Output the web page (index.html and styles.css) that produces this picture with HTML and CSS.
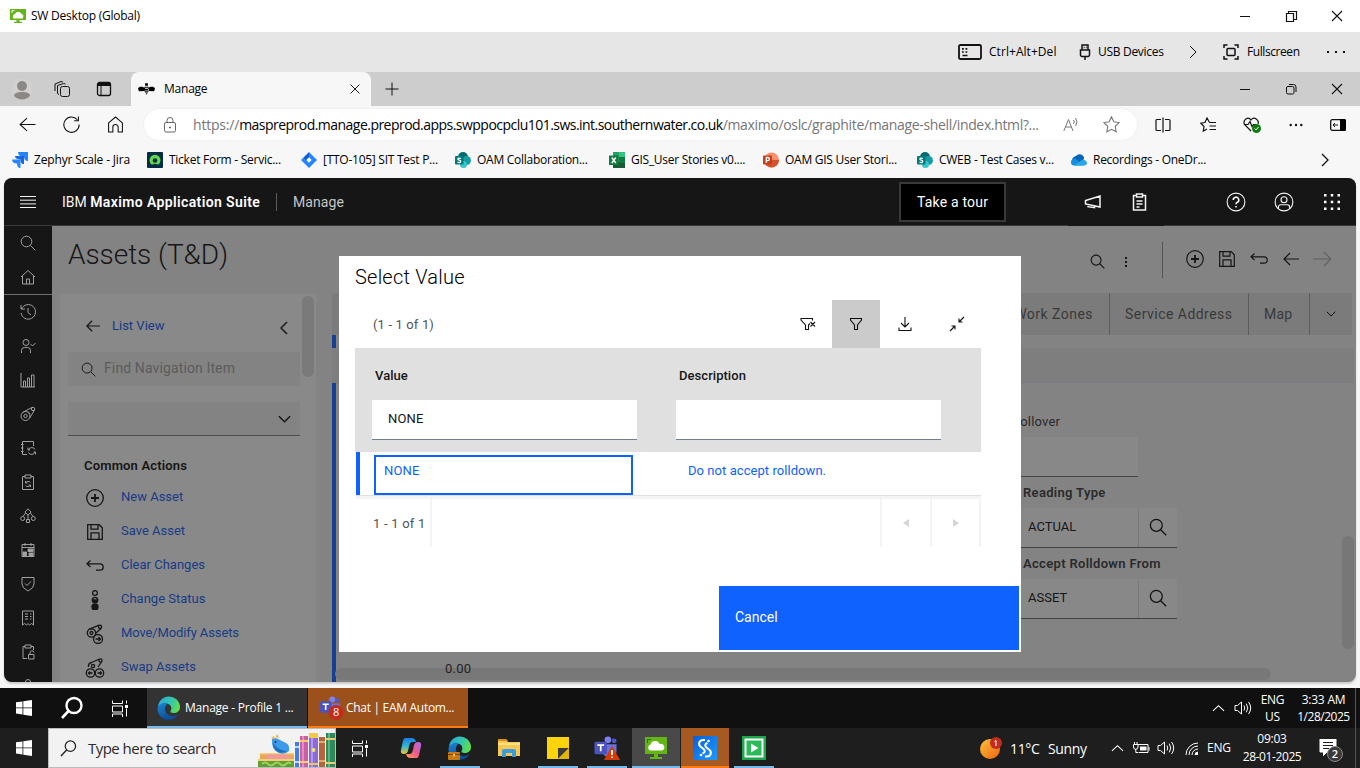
FILE: index.html
```html
<!DOCTYPE html>
<html lang="en">
<head>
<meta charset="utf-8">
<title>SW Desktop (Global)</title>
<link rel="stylesheet" href="styles.css">
</head>
<body>
<svg class="defs" aria-hidden="true">
  <defs>
    <linearGradient id="edgeA" x1="0" y1="0.2" x2="1" y2="0.5"><stop offset="0" stop-color="#2aa5dc"/><stop offset=".6" stop-color="#35c9a8"/><stop offset="1" stop-color="#62dd4c"/></linearGradient>
    <linearGradient id="edgeB" x1="0" y1="0" x2="0.5" y2="1"><stop offset="0" stop-color="#1b86d6"/><stop offset="1" stop-color="#0c4a94"/></linearGradient>
    <linearGradient id="copA" x1="0" y1="0" x2="0" y2="1"><stop offset="0" stop-color="#1c7be6"/><stop offset=".5" stop-color="#2fb5d8"/><stop offset="1" stop-color="#f0c62d"/></linearGradient>
    <linearGradient id="copB" x1="1" y1="0" x2="0" y2="1"><stop offset="0" stop-color="#a66bf0"/><stop offset=".5" stop-color="#ee5a8c"/><stop offset="1" stop-color="#ff9d4f"/></linearGradient>
    <linearGradient id="sun" x1="0" y1="0" x2="1" y2="1"><stop offset="0" stop-color="#f9c23c"/><stop offset="1" stop-color="#f2620f"/></linearGradient>
    <linearGradient id="blue" x1="0" y1="0" x2="1" y2="1"><stop offset="0" stop-color="#0b5ed7"/><stop offset="1" stop-color="#1c9bff"/></linearGradient>
  </defs>
  <symbol id="min" viewBox="0 0 16 16"><path d="M3 8.5h10"/></symbol>
  <symbol id="restore" viewBox="0 0 16 16"><path d="M3.500 5.500h7v8h-7zM5.500 5.500v-2h8v8h-3" stroke-width="1.200"/></symbol>
  <symbol id="restore-r" viewBox="0 0 16 16"><rect x="3.5" y="5.5" width="7.5" height="7.5" rx="1.5"/><path d="M6 3.500h4.500a2.500 2.500 0 0 1 2.500 2.500V11"/></symbol>
  <symbol id="x" viewBox="0 0 16 16"><path d="M3 3l10 10M13 3L3 13" stroke-width="1.100"/></symbol>
  <symbol id="search" viewBox="0 0 16 16"><circle cx="6.500" cy="6.500" r="5.300"/><path d="M10.400 10.400l4.900 4.900"/></symbol>
  <symbol id="plusc" viewBox="0 0 20 20"><circle cx="10" cy="10" r="8.300"/><path d="M10 6v8M6 10h8" stroke-width="1.800"/></symbol>
  <symbol id="save" viewBox="0 0 18 18"><path d="M1.700 1.700h11.500l3.100 3.100v11.500H1.700zM5 1.700v4.500h7V1.700M5 16.300v-6.500h8v6.500"/></symbol>
  <symbol id="undo" viewBox="0 0 18 18"><path d="M4.500 3.500L1 6.800l3.500 3.300M1 6.800h13a3.200 3.200 0 0 1 0 6.400H10"/></symbol>
  <symbol id="left" viewBox="0 0 16 16"><path d="M7 2L1 8l6 6M1 8h15"/></symbol>
  <symbol id="right" viewBox="0 0 18 16"><path d="M11 1l7 7-7 7M0 8h17"/></symbol>
  <symbol id="engine" viewBox="0 0 16 16"><circle cx="5.500" cy="10" r="4.500"/><circle cx="5.500" cy="10" r="1.700"/><circle cx="13" cy="3" r="1.700"/><path d="M2.500 6.500l9.300-5M9.700 12l4.800-8M8 5.500l2 2.500"/></symbol>
  <symbol id="win" viewBox="0 0 16 16"><path d="M0 2.300l6.500-.9v6.100H0zM7.300 1.300L16 0v7.500H7.300zM0 8.300h6.500v6.200L0 13.600zM7.300 8.300H16V16l-8.700-1.300z"/></symbol>
  <symbol id="taskview" viewBox="0 0 17 16"><path d="M.5 0v3h10V0M.5 5.500h10v6H.5zM.5 16.500v-3h10v3M14.500 0v3M14.500 8v8"/><path d="M13 4.500h3v3h-3z" fill="#fff" stroke="none"/></symbol>
  <symbol id="caret" viewBox="0 0 14 8"><path d="M1 7l6-5.500L13 7" stroke-width="1.200"/></symbol>
  <symbol id="speaker" viewBox="0 0 18 16"><path d="M1 5.500h2.500L7.500 2v12l-4-3.500H1zM10 5.500q1.500 2.500 0 5M12.300 3.700q3 4.300 0 8.600M14.600 2q4.200 6 0 12"/></symbol>
  <symbol id="edge" viewBox="0 0 24 24"><path d="M1 12A11 11 0 0 1 23 11c0 4-3 6-6.500 6-2.500 0-3.500-1-3-2 1.500-2 1.300-6-2.500-7C7 7 2 9 1 12z" fill="url(#edgeA)"/><path d="M.500 13C1 8 7 5.500 11 7.500c-3.500 2-4 7-1.500 10 2.500 3 7.500 3.500 12 .5C18 24 12 25 7 23 3 21 .500 17 .500 13z" fill="url(#edgeB)"/></symbol>
  <symbol id="sharepoint" viewBox="0 0 16 16"><circle cx="8" cy="5" r="5" fill="#036c70"/><circle cx="11.500" cy="8.500" r="4.500" fill="#1a9ba1"/><circle cx="8.500" cy="12.500" r="3.500" fill="#37c6d0"/><rect y="4" width="8.500" height="8.500" rx="1" fill="#03787c"/><path d="M6 6.500Q3 5.500 2.800 7c0 1.300 3 1 3 2.500 0 1.400-2.300 1.200-3.300.5" fill="none" stroke="#fff" stroke-width="1.200"/></symbol>
  <symbol id="citrix" viewBox="0 0 24 24"><path d="M1 1h22v17H1zM10 18h4v3h4v2H6v-2h4z" fill="#62b515"/><path d="M3.500 7V3.500H7" fill="none" stroke="#2f6b05"/><path d="M6 14.500a3.200 3.200 0 0 1 .6-6 4.700 4.700 0 0 1 9-.5 3.300 3.300 0 0 1 2.400 6.500z" fill="#fff"/></symbol>
  <symbol id="teams" viewBox="0 0 24 24"><circle cx="14" cy="4" r="3.500" fill="#7b83eb"/><circle cx="20.500" cy="5" r="2.500" fill="#5059c9"/><path d="M9 8.500h14v7a5 5 0 0 1-4.500 5A7 7 0 0 1 9 19z" fill="#6a72dc"/><rect y="6" width="13" height="13" rx="1.500" fill="#4b53bc"/><path d="M3 9.500h7M6.500 9.500v6.500" stroke="#fff" stroke-width="1.800" fill="none"/></symbol>
</svg>

<header class="titlebar">
  <svg class="logo16" viewBox="0 0 16 16"><path d="M0 1h16v11H0zM6.500 12h3v1.700H12V15H4v-1.300h2.500z" fill="#62b515"/><path d="M2 10.500V2.500h12v8z" fill="#62b515" stroke="#fff" stroke-width=".01"/><path d="M3 10.500V9.500a2.500 2.500 0 0 1 2-3.500 3.500 3.500 0 0 1 6.500 0 2.500 2.500 0 0 1 1.500 3.500v1z" fill="#fff"/><path d="M2 5V2.500h2.500" fill="none" stroke="#fff"/></svg>
  <span class="ui">SW Desktop (Global)</span>
  <div class="winctl"><span><svg><use href="#min"/></svg></span><span><svg><use href="#restore"/></svg></span><span><svg><use href="#x"/></svg></span></div>
</header>

<div class="viewerbar">
  <svg class="kbd" viewBox="0 0 24 16"><rect x="1" y="1" width="22" height="14" rx="1.500" stroke-width="1.800"/><path d="M4 4.800h1.800M7.500 4.800h1.800M4 8h1.800M7.500 8h1.800M4.500 11.500h5" stroke-width="1.700"/></svg>
  <span class="ui cad">Ctrl+Alt+Del</span>
  <svg class="usb" viewBox="0 0 12 16"><path d="M3 6V1h6v5M1.500 6h9v5a1.500 1.500 0 0 1-1.500 1.500H3A1.500 1.500 0 0 1 1.500 11zM6 12.500V16M4.700 3.500h.8M6.800 3.500h.8" stroke-width="1.500"/></svg>
  <span class="ui usbt">USB Devices</span>
  <svg class="chev" viewBox="0 0 8 14"><path d="M1 1l6 6-6 6"/></svg>
  <svg class="full" viewBox="0 0 16 16"><path d="M1 4V1h3.500M11.500 1H15v3M15 12v3h-3.500M4.500 15H1v-3" stroke-width="1.500"/><rect x="4" y="4.500" width="8" height="7" rx="1" stroke-width="1.500"/></svg>
  <span class="ui fullt">Fullscreen</span>
  <svg class="dots3" viewBox="0 0 18 4"><path d="M0 1h2v2H0zM8 1h2v2H8zM16 1h2v2h-2z"/></svg>
</div>

<div class="tabstrip">
  <svg class="avatar" viewBox="0 0 22 22"><circle cx="11" cy="11" r="10.500" fill="#d3d1d0"/><circle cx="11" cy="8" r="5" fill="#8b8886"/><path d="M3 18c0-3 3-4 8-4s8 1 8 4a11 11 0 0 1-16 0z" fill="#8b8886"/></svg>
  <svg class="wsp" viewBox="0 0 16 16"><rect x="6.500" y="5.500" width="9" height="10" rx="2"/><path d="M3.500 12.500V4.500l6-2 2 .5M1 10V3l6-2.500 2 .5M5 13.500l-1.500-1"/></svg>
  <svg class="vt" viewBox="0 0 16 16"><rect x="1.500" y="1.500" width="13" height="13" rx="2" stroke-width="1.300"/><path d="M2 3.500h12" stroke-width="3"/><path d="M5 4v10"/></svg>
  <div class="tab">
    <svg class="bee" viewBox="0 0 18 12"><path d="M0 5.500C1 2.500 6 3.500 7.500 5L7 8 1 8.500zM18 5.500C17 2.500 12 3.500 10.500 5L11 8l6 .5zM7.500 0h3v2.500h-3zM7 3.500h4v1.300H7zM6.500 5.700h5v1.800h-5zM6.800 8.300h4.400l-.7 1.500h-3zM8 10.500h2L9 12z"/></svg>
    <span class="ui">Manage</span>
    <svg class="tabx"><use href="#x"/></svg>
  </div>
  <svg class="newtab" viewBox="0 0 14 14"><path d="M7 .5v13M.5 7h13"/></svg>
  <div class="winctl"><span><svg><use href="#min"/></svg></span><span><svg><use href="#restore-r"/></svg></span><span><svg><use href="#x"/></svg></span></div>
</div>

<div class="addressbar">
  <svg class="nav" viewBox="0 0 16 16"><path d="M7.500 2L1 8l6.500 6M1 8h14.500" stroke-width="1"/></svg>
  <svg class="nav" viewBox="0 0 16 16"><path d="M13.500 3.500A7.200 7.200 0 1 0 15.200 8M14.500.5v4h-4" stroke-width="1"/></svg>
  <svg class="nav" viewBox="0 0 16 16"><path d="M1.500 6.500L8 1l6.500 5.500V15h-4v-4.500a2.500 2.500 0 0 0-5 0V15h-4z" stroke-width="1"/></svg>
  <div class="omnibox">
    <svg class="lock" viewBox="0 0 14 16"><rect x="1.500" y="5.500" width="11" height="9.500" rx="1.500"/><path d="M4 5.500V3.500a3 3 0 0 1 6 0v2"/><path d="M6.500 10h1v1h-1z"/></svg>
    <span class="url"><span class="dim">https://</span><span class="host">maspreprod.manage.preprod.apps.swppocpclu101.sws.int.southernwater.co.uk</span><span class="path">/maximo/oslc/graphite/manage-shell/index.html?...</span></span>
    <svg class="read" viewBox="0 0 16 16"><path d="M.8 14L5.500 2.500 10 14M2.500 10h6M10.500 3q1.500 2 0 4M12.500 1q3 4 0 8"/></svg>
    <svg class="star" viewBox="0 0 16 16"><path d="M8 .8l2.200 4.700 5 .7-3.700 3.500.9 5.200L8 12.500l-4.400 2.400.9-5.200L.8 6.200l5-.7z"/></svg>
  </div>
  <svg class="t1" viewBox="0 0 16 16"><path d="M6 2.500H2A1 1 0 0 0 1 3.500v9a1 1 0 0 0 1 1h4M10 2.500h4a1 1 0 0 1 1 1v9a1 1 0 0 1-1 1h-4M8 .5v15" stroke-width="1.200"/></svg>
  <svg class="t2" viewBox="0 0 16 16"><path d="M9.500 5.500L7 1 5 5.500.8 6.200 4 9.500l-.7 4.700L7 12M9.500 5.500H16M9.500 9H16M9.500 12.500H16" stroke-width="1.200"/></svg>
  <svg class="t3" viewBox="0 0 18 16"><path d="M8 14L1.500 7.500C-.5 3 5-1 8 3c3-4 8.500 0 7 4M1 7.500h4l2-3 2 5 1.500-2H13" stroke-width="1.200"/><circle cx="13.500" cy="11.500" r="4.500" fill="#107c10" stroke="none"/><path d="M11.500 11.500l1.500 1.500 2.500-3" stroke="#fff"/></svg>
  <svg class="t4" viewBox="0 0 14 4"><g fill="#111" stroke="none"><circle cx="1.700" cy="2" r="1.200"/><circle cx="7" cy="2" r="1.200"/><circle cx="12.300" cy="2" r="1.200"/></g></svg>
  <svg class="t5" viewBox="0 0 16 12"><rect x=".7" y=".7" width="14.600" height="10.600" rx="1.500" stroke-width="1.300"/><path d="M10 0h4.500A1.500 1.500 0 0 1 16 1.500v9a1.500 1.500 0 0 1-1.500 1.500H10z" fill="#000" stroke="none"/><path d="M5 4L3 6l2 2M3 6h5"/></svg>
</div>

<nav class="bookmarks">
  <a class="bm first"><svg viewBox="0 0 16 16"><path d="M6 0h10v9c-3 0-4-2-4-4.500C8 4.500 6 3 6 0z" fill="#2684ff"/><path d="M3 4h9v8c-3 0-3.500-2-3.500-4.500C5 7.500 3 6 3 4z" fill="#1769e0"/><path d="M0 7.500h8.500V16C6 16 5 14 5 11.500 2 11.500 0 10 0 7.500z" fill="#2684ff"/></svg><span class="ui">Zephyr Scale - Jira</span></a>
  <a class="bm"><svg viewBox="0 0 16 16"><rect width="16" height="16" rx="1" fill="#032d42"/><path d="M4.500 12.500a5.500 5.500 0 1 1 7 0c-1 .5-1.500-.8-3.500-.8s-2.500 1.300-3.500.8z" fill="#62d84e"/><circle cx="8" cy="8.500" r="2.300" fill="#032d42"/></svg><span class="ui">Ticket Form - Servic...</span></a>
  <a class="bm"><svg viewBox="0 0 16 16"><path d="M8 0l8 8-8 8-8-8z" fill="#2684ff"/><path d="M8 .5v5L5.500 8l-3-2z" fill="#0f5bd0"/><path d="M8 5.300L10.700 8 8 10.700 5.300 8z" fill="#f7f7f7"/></svg><span class="ui">[TTO-105] SIT Test P...</span></a>
  <a class="bm"><svg><use href="#sharepoint"/></svg><span class="ui">OAM Collaboration...</span></a>
  <a class="bm"><svg viewBox="0 0 16 16"><path d="M4 0h12v16H4z" fill="#21a366"/><path d="M10 0h6v5h-6z" fill="#33c481"/><path d="M4 10h12v6H4z" fill="#185c37"/><path d="M10 5h6v6h-6z" fill="#107c41"/><rect y="3.500" width="9.500" height="9.500" fill="#107c41"/><path d="M2.800 5.500l4 5.500M6.800 5.500l-4 5.500" stroke="#fff" stroke-width="1.400"/></svg><span class="ui">GIS_User Stories v0....</span></a>
  <a class="bm"><svg viewBox="0 0 16 16"><circle cx="8.500" cy="8" r="7.500" fill="#ff8f6b"/><path d="M1 8h15a7.500 7.500 0 0 1-15 0z" fill="#d35230"/><rect y="3.500" width="9" height="9" rx="1" fill="#c43e1c"/><path d="M3.300 11V5.500h1.500a1.500 1.500 0 0 1 0 3.200H3.300" stroke="#fff" stroke-width="1.300" fill="none"/></svg><span class="ui">OAM GIS User Stori...</span></a>
  <a class="bm"><svg><use href="#sharepoint"/></svg><span class="ui">CWEB - Test Cases v...</span></a>
  <a class="bm"><svg viewBox="0 0 16 16"><path d="M1 10a5 5 0 0 1 4-6 4.500 4.500 0 0 1 8 3l-6 6z" fill="#0364b8"/><path d="M0 10.500A3.500 3.500 0 0 1 5 7l8 6.500H3a3 3 0 0 1-3-3z" fill="#1490df"/><path d="M3 13.500L11 8a4 4 0 0 1 5 2.500 3 3 0 0 1-3 3z" fill="#28a8ea"/></svg><span class="ui">Recordings - OneDr...</span></a>
  <svg class="more" viewBox="0 0 8 14"><path d="M1 1l6 6-6 6" stroke-width="1.300"/></svg>
</nav>

<div class="app">
  <header class="suite">
    <svg class="burger" viewBox="0 0 16 12"><path d="M0 .5h16M0 4.200h16M0 7.900h16M0 11.500h16"/></svg>
    <span class="brand">IBM <b>Maximo Application Suite</b></span>
    <i class="vline"></i>
    <span class="prod">Manage</span>
    <button class="tour">Take a tour</button>
    <div class="darkcell">
      <svg class="mega" viewBox="0 0 17 14"><path d="M16 1v11L1.500 9V5.500zM4 9.500v2.200l6.500 1V11" stroke-width="1.500"/></svg>
      <svg class="clip" viewBox="0 0 14 18"><path d="M4 2.500H1v14.500h12V2.500h-3M4 1h6v3H4zM4 8h6M4 11h6M4 14h3" stroke-width="1.500"/></svg>
    </div>
    <svg class="help" viewBox="0 0 18 18"><circle cx="9" cy="9" r="8"/><path d="M6.500 7.200a2.500 2.500 0 1 1 3.500 2.200Q9 10 9 11M9 12.500v1.500" stroke-width="1.400"/></svg>
    <svg class="user" viewBox="0 0 18 18"><circle cx="9" cy="9" r="8"/><circle cx="9" cy="7" r="2.700"/><path d="M4 15v-1.500a2 2 0 0 1 2-2h6a2 2 0 0 1 2 2V15"/></svg>
    <svg class="grid9" viewBox="0 0 16 16"><path d="M0 0h2.500v2.500H0zM6.750 0h2.500v2.500h-2.500zM13.500 0H16v2.500h-2.500zM0 6.750h2.500v2.500H0zM6.750 6.750h2.500v2.500h-2.500zM13.500 6.750H16v2.500h-2.500zM0 13.500h2.500V16H0zM6.750 13.500h2.500V16h-2.500zM13.500 13.500H16V16h-2.500z"/></svg>
  </header>
  <div class="body">
    <aside class="rail">
      <span><svg><use href="#search"/></svg></span>
      <span class="sep"><svg viewBox="0 0 16 16"><path d="M1 8l7-6.500L15 8M2.500 7v8h11V7M6.500 15v-5h3v5"/></svg></span>
      <span><svg viewBox="0 0 16 16"><path d="M1 1v4h4M1.500 5A7.300 7.300 0 1 1 1 9M8 4v4.500l3 2.500"/></svg></span>
      <span><svg viewBox="0 0 16 16"><circle cx="6" cy="4.500" r="3"/><path d="M1.500 15v-2.500a3 3 0 0 1 3-3h3a3 3 0 0 1 3 3V15M10.500 6l2 2L15.500 5"/></svg></span>
      <span><svg viewBox="0 0 16 16"><path d="M1 1v14h14M3.500 15V9h2v6M7.500 15V6h2v9M11.500 15V3h2.500v12"/></svg></span>
      <span><svg><use href="#engine"/></svg></span>
      <span><svg viewBox="0 0 16 16"><path d="M7 14.500H2.500v-13h11V6M1 4.500h2.500M1 8h2.500M1 11.500h2.500M15 9.500A3.500 3.500 0 0 0 8.500 10M8 7.500V10h2M8.500 12.500A3.500 3.500 0 0 0 15 12M15.500 14.500V12h-2"/></svg></span>
      <span><svg viewBox="0 0 16 16"><path d="M5 2.500H2.500v13h11v-13H11M5 1h6v3H5zM10.500 8.500a3 3 0 0 0-5 .5M5.500 7v2h2M5.500 11.500a3 3 0 0 0 5-.5M10.500 13v-2h-2"/></svg></span>
      <span><svg viewBox="0 0 16 16"><path d="M8 .8l3 3.200-3 3.200L5 4zM8 7v4M5.500 5L3 8.500M10.500 5L13 8.500M6.500 11.500h3v3h-3z"/><circle cx="2.700" cy="10.500" r="2"/><circle cx="13.300" cy="10.500" r="2"/></svg></span>
      <span><svg viewBox="0 0 16 16"><path d="M2 2.500h12v12H2zM5 1v3M11 1v3M2 5.500h12"/><path d="M8 7h5v2.500H8zM3 10h3.500v3.500H3zM9 11h4v2.500H9z" fill="#a0a0a0"/></svg></span>
      <span><svg viewBox="0 0 16 16"><path d="M2 1.500h12V8q0 4-6 7-6-3-6-7zM5 7.500l2 2 4-4"/></svg></span>
      <span><svg viewBox="0 0 16 16"><path d="M2.500 1h11v14l-2-1.500L9.500 15 8 13.500 6.500 15l-2-1.500-2 1.500zM5 4h3M10 4h1.500M5 6.500h3M10 6.500h1.500M5 9h3M10 9h1.500"/></svg></span>
      <span><svg viewBox="0 0 16 16"><path d="M5 2.500H3v12h4M5 1h6v3H5zM11 2.500h2.500V6M8.500 10.500h5.500v4.500H8.500zM10 10.500V9a2 2 0 0 1 4-.5"/></svg></span>
      <span><svg viewBox="0 0 16 16"><circle cx="8" cy="4" r="2.500"/><path d="M3 15v-4h10v4"/></svg></span>
    </aside>
    <main class="page">
      <div class="pagehead">
        <h1>Assets (T&amp;D)</h1>
        <div class="tools">
          <svg class="s14"><use href="#search"/></svg>
          <svg class="kebab" viewBox="0 0 4 12"><path d="M1 1h2v2H1zM1 5h2v2H1zM1 9h2v2H1z"/></svg>
          <i class="tline"></i>
          <svg class="s20"><use href="#plusc"/></svg>
          <svg class="s18"><use href="#save"/></svg>
          <svg class="s18 un"><use href="#undo"/></svg>
          <svg class="s16"><use href="#left"/></svg>
          <svg class="s18 off"><use href="#right"/></svg>
        </div>
      </div>
      <div class="cols">
        <section class="panel">
          <div class="panelmain">
            <div class="listview"><svg class="larr"><use href="#left"/></svg><a>List View</a><svg class="coll" viewBox="0 0 8 14"><path d="M7 1L1 7l6 6" stroke-width="1.500"/></svg></div>
            <div class="find"><svg><use href="#search"/></svg><span>Find Navigation Item</span></div>
            <div class="sel"><svg viewBox="0 0 14 8"><path d="M1 1l6 6 6-6" stroke-width="1.600"/></svg></div>
            <h2>Common Actions</h2>
            <a class="act"><svg class="s20"><use href="#plusc"/></svg><span>New Asset</span></a>
            <a class="act"><svg class="s18"><use href="#save"/></svg><span>Save Asset</span></a>
            <a class="act"><svg class="s18"><use href="#undo"/></svg><span>Clear Changes</span></a>
            <a class="act"><svg class="s20" viewBox="0 0 20 20"><circle cx="10" cy="3" r="2.400"/><circle cx="10" cy="10" r="2.600"/><path d="M7.400 10a2.600 2.600 0 0 0 5.200 0z" fill="#161616"/><circle cx="10" cy="17" r="3" fill="#161616"/></svg><span>Change Status</span></a>
            <a class="act"><svg class="s20" viewBox="0 0 20 20"><circle cx="6.500" cy="9" r="4.200"/><circle cx="6.500" cy="9" r="1.500"/><circle cx="15" cy="2.800" r="1.600"/><path d="M4 5.300L14 1.200M11 9l5.500-5"/><circle cx="13" cy="15" r="4.500"/><path d="M10.500 15h5M13.500 13l2 2-2 2"/></svg><span class="mm">Move/Modify Assets</span></a>
            <a class="act"><svg class="s20" viewBox="0 0 20 20"><path d="M3.500 9a4 4 0 0 1 3-4.500l8-3.500M13 9l3.500-5"/><circle cx="8" cy="8" r="1.600"/><circle cx="15.500" cy="2.500" r="1.600"/><circle cx="5.500" cy="15" r="4.200"/><circle cx="14.500" cy="15" r="4.200"/><path d="M3.500 15h4M5 13.500L3.500 15 5 16.500M12.500 15h4M15 13.500l1.500 1.500-1.500 1.500"/></svg><span>Swap Assets</span></a>
          </div>
          <i class="pscroll"></i>
        </section>
        <section class="content">
          <div class="tabs"><span class="tb wz">Work Zones</span><span class="tb sa">Service Address</span><span class="tb mp">Map</span><span class="tb dd"><svg viewBox="0 0 10 6"><path d="M.7.700L5 5 9.300.7"/></svg></span></div>
          <div class="under"></div>
          <div class="strip"></div>
          <div class="form">
            <div class="fields">
              <label class="thin">Rollover</label>
              <div class="inp short"></div>
              <label>Reading Type</label>
              <div class="inp"><span>ACTUAL</span><i><svg><use href="#search"/></svg></i></div>
              <label>Accept Rolldown From</label>
              <div class="inp"><span>ASSET</span><i><svg><use href="#search"/></svg></i></div>
            </div>
            <i class="vscroll"></i>
            <div class="hscroll">0.00</div>
          </div>
        </section>
      </div>
    </main>
  </div>
</div>

<footer class="taskbar remote">
  <svg class="r-win"><use href="#win"/></svg>
  <svg class="r-search" viewBox="0 0 24 24"><circle cx="14" cy="9.500" r="7.500" stroke-width="2.400"/><path d="M8.500 15L2 22" stroke-width="2.600"/></svg>
  <svg class="r-tv"><use href="#taskview"/></svg>
  <div class="task edge-task"><svg class="s24"><use href="#edge"/></svg><span class="ui">Manage - Profile 1 ...</span></div>
  <div class="task chat-task"><svg class="s24" viewBox="0 0 24 24"><use href="#teams" width="21" height="21"/><circle cx="16" cy="16.500" r="7.500" fill="#c42b1c"/></svg><em>8</em><span class="ui">Chat | EAM Autom...</span></div>
  <div class="tray">
    <svg class="caret"><use href="#caret"/></svg>
    <svg class="spk"><use href="#speaker"/></svg>
    <div class="lang ui"><span>ENG</span><span>US</span></div>
    <div class="clock ui"><span>3:33 AM</span><span class="tight">1/28/2025</span></div>
    <i class="peek"></i>
  </div>
</footer>

<footer class="taskbar local">
  <div class="startcell"><svg class="r-win0"><use href="#win"/></svg></div>
  <div class="searchbox">
    <svg class="sb-ic" viewBox="0 0 18 18"><circle cx="11" cy="6.500" r="5.500" stroke-width="1.300"/><path d="M7 10.500L1 17" stroke-width="1.500"/></svg>
    <span>Type here to search</span>
    <svg class="art" viewBox="0 0 77 35">
      <path d="M2 20h34v7H2z" fill="#e6a94e"/><path d="M2 20h34v1.500H2z" fill="#f7cf7c"/><path d="M8 21.500h20q5 1 5 5H8z" fill="#ef9a9a"/><path d="M0 27h36v8H0z" fill="#5f9e32"/><path d="M0 26h36v2H0z" fill="#f2cf77"/><path d="M4 31q3-3 6 0t6 0 6 0 6 0 5 0" stroke="#9bd15d" stroke-width="2" fill="none"/>
      <path d="M14 6q3-2 6 0l8 4q4 2 3 8-4 4-10 2-8-3-7-14z" fill="#3b9bea"/><path d="M15 10q6 8 14 8-4 3-9 1-5-3-5-9z" fill="#1f6fc0"/><circle cx="17.500" cy="9" r="1" fill="#0d2f57"/><path d="M13 5l3-2 1 3z" fill="#f1b32e"/><path d="M18 4l1-3 2 4z" fill="#e8a43a"/>
      <path d="M37 9h4v26h-4z" fill="#3f7fe0"/><path d="M37 13h4v2h-4zM37 28h4v2h-4z" fill="#b7d8ff"/>
      <path d="M42 3h8v32h-8z" fill="#cb5fa6"/><path d="M44 3h2v32h-2z" fill="#e58cc6"/><path d="M42 7h8v2h-8zM42 28h8v2h-8z" fill="#f3cf6a"/>
      <path d="M51 0h9v35h-9z" fill="#8d6bd6"/><path d="M53 0h2v35h-2z" fill="#b09af0"/><path d="M51 0h9v5h-9zM51 30h9v2h-9z" fill="#f1c84c"/><circle cx="55.500" cy="17" r="2" fill="#f1e36b"/>
      <path d="M61 4h6v31h-6z" fill="#b4653e"/><path d="M61 8h6v2h-6zM61 27h6v2h-6z" fill="#e8a86a"/>
      <path d="M68 0h9v35h-9z" fill="#2f8a5b"/><path d="M70 0h2v35h-2z" fill="#55b583"/><path d="M68 5h9v2h-9zM68 29h9v2h-9z" fill="#e9cf74"/>
    </svg>
  </div>
  <div class="cell tv"><svg class="tvic"><use href="#taskview"/></svg></div>
  <div class="cell c50"><svg class="s22" viewBox="0 0 22 22"><path d="M5 1h7q3 0 4 4H12Q10 5 9 9l-1 5q-1 3-4 3-4 0-3-4L3 4q.500-3 2-3z" fill="url(#copA)"/><path d="M17 21h-7q-3 0-4-4h4q2 0 3-4l1-5q1-3 4-3 4 0 3 4l-2 9q-.500 3-2 3z" fill="url(#copB)"/></svg></div>
  <div class="cell c48 on"><svg class="s24" viewBox="0 0 24 24"><use href="#edge"/><rect x="0" y="16" width="12" height="8" rx="1" fill="#c77a12"/><path d="M0 18.500h12" stroke="#7a4300"/><path d="M5 18h2v2.500H5z" fill="#f5c044"/></svg></div>
  <div class="cell c50"><svg class="s22" viewBox="0 0 22 20"><path d="M0 1h8l2 3h12v14H0z" fill="#f8c850"/><path d="M0 1h8l2 2H0z" fill="#d98e10"/><path d="M0 5h22v2H0z" fill="#ffdf86"/><path d="M4 19v-6a2 2 0 0 1 2-2h10a2 2 0 0 1 2 2v6h-4v-4H8v4z" fill="#3b9be0"/></svg></div>
  <div class="cell c48 on"><svg class="s22" viewBox="0 0 22 22"><path d="M0 0h22v22H0z" fill="#fdd30a"/><path d="M11 22V11h11z" fill="#3a3a3a"/><path d="M11 22L22 11v11z" fill="#e2b600"/></svg></div>
  <div class="cell c50 on"><svg class="s24w" viewBox="0 0 26 24"><use href="#teams" width="24" height="23"/><path d="M18 10l8 14H10z" fill="#d83b01"/><path d="M18 14v5M18 20.500v1.500" stroke="#fff" stroke-width="1.800"/></svg></div>
  <div class="cell active"><svg class="s24"><use href="#citrix"/></svg></div>
  <div class="cell alert"><svg class="s24" viewBox="0 0 24 24"><rect width="24" height="24" fill="url(#blue)"/><path d="M12 4h-1.500C5.500 4 5 9 8 11l2.500 2q3 3-1 4.500M12 20.500h1.500c5 0 5.500-5 2.500-7l-2.500-2q-3-3 1-4.500" fill="none" stroke="#fff" stroke-width="2"/><circle cx="15.500" cy="5" r="1.300" fill="#fff"/><circle cx="8" cy="19" r="1.300" fill="#fff"/></svg></div>
  <div class="cell c50 on"><svg class="s24" viewBox="0 0 24 24"><path d="M0 0h24v24H0z" fill="#1aa84a"/><path d="M2.500 2.500h19v19h-19z" fill="#fff"/><path d="M4.500 4.500h15v15h-15z" fill="#28bb57"/><path d="M9 7.500l7.500 4.500L9 16.500z" fill="#fff"/></svg></div>
  <div class="tray">
    <svg class="ball" viewBox="0 0 22 22"><circle cx="10" cy="12" r="10" fill="url(#sun)"/><circle cx="16" cy="6" r="6" fill="#c42b1c"/><path d="M14.500 4.500L16 3.500V9" stroke="#fff" fill="none"/></svg>
    <span class="wx deg">11°C</span><span class="wx sunny">Sunny</span>
    <svg class="caret"><use href="#caret"/></svg>
    <svg class="bat" viewBox="0 0 17 12"><path d="M5 2.500h10v8H5.500M16 5v3.500M1.500 0v2M4 0v2M.5 2.500h4.500v2.500a2 2 0 0 1-4.500 0zM2.800 7v3.500H5"/><path d="M7 4.500h6.500v4H7z" fill="#fff" stroke="none"/></svg>
    <svg class="spk"><use href="#speaker"/></svg>
    <svg class="wifi" viewBox="0 0 13 13"><path d="M1 13A12 12 0 0 1 13 1M4 13a9 9 0 0 1 9-9M7 13a6 6 0 0 1 6-6" /><path d="M10 13a3 3 0 0 1 3-3v3z" fill="#fff"/></svg>
    <span class="ui eng">ENG</span>
    <div class="clock2 ui"><span>09:03</span><span class="tight2">28-01-2025</span></div>
    <div class="note"><svg viewBox="0 0 18 17"><path d="M1 0h16v13h-9l-3.500 3.500V13H1z" fill="#fff"/><path d="M4 3.500h10M4 6.500h10M4 9.500h6" stroke="#1e1e1e"/></svg><b>2</b></div>
    <i class="peek"></i>
  </div>
</footer>

<div class="modal">
  <h3>Select Value</h3>
  <div class="mtools">
    <span class="cnt">(1 - 1 of 1)</span>
    <span class="mb"><svg viewBox="0 0 16 16"><path d="M12.500 4.500v-2H1V4l4.500 5v4.500h3V9L10 7.500M10.500 6l4.500 4.500M15 6l-4.500 4.500"/></svg></span>
    <span class="mb hot"><svg viewBox="0 0 16 16"><path d="M2.500 2.500h11V4L9.500 9v4.500h-3V9l-4-5z"/></svg></span>
    <span class="mb dl"><svg viewBox="0 0 16 16"><path d="M8 1v10M4 7l4 4 4-4M2 11.500v3h12v-3"/></svg></span>
    <span class="mb cl"><svg viewBox="0 0 16 16"><path d="M15 1l-5 5M10 2.500V6h3.500M1 15l5-5M2.500 10H6v3.500"/></svg></span>
  </div>
  <div class="thead">
    <div class="th"><b>Value</b><div class="filter">NONE</div></div>
    <div class="th"><b>Description</b><div class="filter"></div></div>
  </div>
  <div class="trow"><i class="mark"></i><div class="td1">NONE</div><div class="td2">Do not accept rolldown.</div></div>
  <div class="pager"><span>1 - 1 of 1</span><i class="pg"><svg viewBox="0 0 6 8"><path d="M6 0v8L0 4z"/></svg></i><i class="pg nx"><svg viewBox="0 0 6 8"><path d="M0 0v8l6-4z"/></svg></i></div>
  <button class="cancel">Cancel</button>
</div>
</body>
</html>
```
FILE: styles.css
```css
* { box-sizing: border-box; }
html, body { margin: 0; padding: 0; }
body { width: 1360px; height: 768px; overflow: hidden; position: relative; display: flex; flex-direction: column; background: #f7f7f7; font-family: "Open Sans", "Noto Sans", sans-serif; color: #000; }
.defs { position: absolute; width: 0; height: 0; }
svg { display: block; flex: none; fill: none; stroke: #111; stroke-width: 1; }
i, em { font-style: normal; flex: none; }
.ui { font-size: 12px; letter-spacing: -0.23px; white-space: nowrap; line-height: 16px; }
.s14 { width: 14px; height: 14px; }
.s16 { width: 16px; height: 16px; }
.s18 { width: 18px; height: 18px; }
.s20 { width: 20px; height: 20px; }
.s22 { width: 22px; height: 22px; }
.s24 { width: 24px; height: 24px; }
.s24w { width: 26px; height: 24px; }
.logo16 { stroke: none; }

/* viewer window */
.titlebar { flex: none; height: 32px; background: #fff; display: flex; align-items: center; }
.logo16 { width: 16px; height: 16px; margin: 0 5px 0 10px; }
.winctl { display: flex; margin-left: auto; align-self: stretch; align-items: center; }
.winctl span { width: 46px; display: flex; justify-content: center; }
.winctl svg { width: 16px; height: 16px; }
.viewerbar { flex: none; height: 40px; background: #e6e6e6; display: flex; align-items: center; padding-left: 958px; }
.kbd { width: 24px; height: 16px; margin-right: 7px; }
.cad { width: 90px; letter-spacing: 0.05px; }
.usb { width: 12px; height: 16px; margin-right: 7px; }
.usbt { width: 91px; letter-spacing: -0.3px; }
.chev { width: 8px; height: 14px; margin-right: 26px; }
.full { width: 16px; height: 16px; margin-right: 8px; }
.fullt { width: 80px; letter-spacing: -0.42px; }
.dots3 { width: 18px; height: 4px; fill: #111; stroke: none; }

/* browser */
.tabstrip { flex: none; height: 34px; background: #cdcdcd; display: flex; align-items: center; }
.avatar { width: 22px; height: 22px; margin-left: 11px; stroke: none; }
.wsp { width: 16px; height: 16px; margin-left: 21px; }
.vt { width: 16px; height: 16px; margin-left: 26px; }
.tab { width: 240px; height: 34px; background: #f7f7f7; border-radius: 8px 8px 0 0; margin-left: 19px; display: flex; align-items: center; padding-left: 7px; }
.bee { width: 17px; height: 12px; margin-right: 9px; fill: #000; stroke: none; }
.tabx { width: 14px; height: 14px; margin-left: 141px; }
.newtab { width: 14px; height: 14px; margin-left: 14px; }
.addressbar { flex: none; height: 37px; display: flex; align-items: center; padding-left: 19px; }
.nav { width: 17px; height: 17px; margin-right: 27px; }
.omnibox { width: 993px; height: 31px; border-radius: 16px; background: #fff; display: flex; align-items: center; padding-left: 19px; margin-left: -7px; box-shadow: 0 0 2px #e4e4e4; }
.lock { width: 14px; height: 16px; stroke: #666; }
.url { width: 870px; margin-left: 16px; font-size: 14px; white-space: nowrap; color: #767676; }
.dim { letter-spacing: -0.2px; }
.host { letter-spacing: -0.53px; color: #000; }
.path { letter-spacing: -0.34px; }
.read { width: 16px; height: 16px; stroke: #767676; }
.star { width: 17px; height: 17px; margin-left: 24px; stroke: #767676; }
.t1 { width: 16px; height: 16px; margin-left: 18px; }
.t2 { width: 16px; height: 16px; margin-left: 29px; }
.t3 { width: 18px; height: 16px; margin-left: 27px; }
.t4 { width: 14px; height: 4px; margin-left: 28px; }
.t5 { width: 16px; height: 12px; margin-left: 27px; }
.bookmarks { flex: none; height: 35px; display: flex; align-items: center; padding-left: 12px; padding-bottom: 1px; }
.bm { width: 154px; display: flex; align-items: center; gap: 6px; }
.bm.first { width: 135px; }
.bm .ui { letter-spacing: -0.26px; }
.bm.first .ui { letter-spacing: -0.16px; }
.bm svg { width: 16px; height: 16px; stroke: none; }
.more { width: 8px; height: 14px; margin-left: 96px; }

/* application frame */
.app { flex: none; width: 1352px; height: 504px; margin: 0 0 6px 4px; border-radius: 8px; overflow: hidden; background: #838383; display: flex; flex-direction: column; font-family: Roboto, "Open Sans", sans-serif; box-shadow: 0 2px 2px #ccc; }
.suite { flex: none; height: 48px; background: #161616; border-bottom: 1px solid #393939; display: flex; align-items: center; color: #f4f4f4; font-size: 14px; }
.suite svg { stroke: #f4f4f4; }
.burger { width: 16px; height: 12px; margin-left: 16px; }
.brand { width: 214px; margin-left: 26px; white-space: nowrap; }
.brand b { font-weight: 600; letter-spacing: 0.38px; color: #fff; }
.vline { width: 1px; height: 18px; background: #5a5a5a; }
.prod { margin-left: 16px; width: 606px; color: #c6c6c6; letter-spacing: 0.09px; }
.tour { width: 107px; height: 40px; background: #000; border: 2px solid #393939; color: #fff; font: 14px Roboto, sans-serif; letter-spacing: 0.2px; padding: 0; white-space: nowrap; }
.darkcell { width: 96px; height: 48px; margin-left: 62px; background: #161616; display: flex; align-items: center; align-self: flex-start; }
.mega { width: 17px; height: 14px; margin-left: 16px; }
.clip { width: 15px; height: 18px; margin-left: 31px; }
.help { width: 20px; height: 20px; margin-left: 62px; }
.user { width: 20px; height: 20px; margin-left: 28px; }
.suite .grid9 { width: 16px; height: 16px; margin-left: 30px; fill: #fff; stroke: none; }
.body { flex: 1; display: flex; min-height: 0; }
.rail { width: 48px; flex: none; background: #161616; overflow: hidden; }
.rail span { display: flex; height: 34px; align-items: center; justify-content: center; }
.rail .sep { height: 35px; border-bottom: 1px solid #6f6f6f; }
.rail svg { width: 16px; height: 16px; stroke: #a0a0a0; }
.page { flex: 1; min-width: 0; display: flex; flex-direction: column; }
.pagehead { flex: none; height: 67px; display: flex; align-items: flex-start; }
.pagehead h1 { margin: 10px 0 0 16px; width: 1022px; font-size: 28px; line-height: 38px; font-weight: 300; letter-spacing: -0.05px; color: #161616; white-space: nowrap; }
.tools { display: flex; align-items: center; height: 66px; }
.tools svg { stroke: #161616; stroke-width: 1.2; }
.tools .s14 { width: 15px; height: 15px; margin-top: 5px; }
.tools .kebab { width: 4px; height: 12px; margin: 5px 0 0 19px; fill: #161616; stroke: none; }
.tline { width: 1px; height: 36px; background: #555; margin: 2px 22px 0 34px; }
.tools .s18 { margin-left: 13px; }
.tools .s18 ~ .s18 { margin-left: 14px; }
.tools .s16 { margin-left: 15px; }
.tools .off { stroke: #606060; }
.cols { flex: 1; display: flex; min-height: 0; }
.panel { width: 256px; height: 387px; margin: 1px 16px 0 8px; background: #898989; display: flex; overflow: hidden; flex: none; }
.panelmain { width: 240px; padding-left: 8px; }
.panel svg { stroke: #161616; }
.panel a { color: #173b87; font-size: 13px; white-space: nowrap; }
.listview { display: flex; align-items: center; height: 58px; padding: 6px 0 0 18px; }
.listview a { width: 168px; margin: -2px 0 0 12px; }
.larr { width: 14px; height: 14px; stroke-width: 1.4; }
.coll { width: 8px; height: 14px; margin-top: 3px; }
.find { height: 34px; width: 232px; background: #838383; display: flex; align-items: center; gap: 8px; padding-left: 13px; font-size: 14px; letter-spacing: 0.12px; color: #5c5c5c; }
.find span { margin-top: -2px; }
.find svg { width: 15px; height: 15px; }
.sel { height: 34px; width: 232px; margin-top: 16px; background: #838383; border-bottom: 1px solid #4d4d4d; display: flex; align-items: center; justify-content: flex-end; padding-right: 9px; }
.sel svg { width: 13px; height: 8px; }
.panel h2 { margin: 20px 0 5px 16px; font-size: 13px; line-height: 19px; font-weight: 600; letter-spacing: 0.16px; color: #161616; }
.act { height: 34px; display: flex; align-items: center; padding-left: 17px; }
.act svg { stroke-width: 1.3; margin-top: 1px; }
.act .s18 { margin: 1px 1px 0; }
.act span { margin: -2px 0 0 16px; }
.act .mm { letter-spacing: -0.12px; }
.pscroll { width: 12px; height: 81px; margin: 2px 0 0 2px; border-radius: 6px; background: #7a7a7a; }
.content { flex: 1; display: flex; flex-direction: column; min-width: 0; }
.tabs { flex: none; height: 42px; width: 1020px; background: #7b7b7b; display: flex; justify-content: flex-end; }
.tb { height: 42px; font-size: 14px; line-height: 42px; letter-spacing: 0.47px; color: #393939; border-right: 1px solid #5c5c5c; white-space: nowrap; }
.wz { padding-right: 16px; }
.sa { width: 139px; padding-left: 15px; }
.mp { width: 61px; padding-left: 15px; letter-spacing: 0.2px; }
.dd { width: 42px; border: 0; padding: 18px 0 0 16px; }
.dd svg { width: 10px; height: 6px; }
.under { flex: none; width: 4px; height: 13px; background: #173f94; }
.strip { flex: none; height: 35px; width: 1022px; background: #7e7e7e; border-bottom: 1px solid #787b82; }
.form { flex: 1; position: relative; border-left: 4px solid #173f94; display: flex; min-height: 0; padding-left: 676px; }
.fields { width: 330px; padding-top: 28px; color: #2a2a2a; }
.fields label { display: block; height: 31px; padding: 6px 0 0 11px; font-size: 13px; line-height: 20px; font-weight: 600; letter-spacing: 0.32px; }
.fields .thin { height: 26px; padding: 1px 0 0; font-weight: 400; letter-spacing: 0.2px; }
.inp { width: 165px; height: 40px; background: #888; border-bottom: 1px solid #444; display: flex; align-items: center; font-size: 13px; color: #161616; }
.inp.short { width: 126px; }
.inp span { width: 126px; padding: 0 0 2px 16px; }
.inp i { border-left: 1px solid #777; width: 39px; height: 38px; display: flex; align-items: center; justify-content: center; }
.inp i svg { width: 18px; height: 18px; stroke-width: 1.1; margin-bottom: 1px; }
.vscroll { position: absolute; right: 2px; top: 153px; width: 12px; height: 113px; border-radius: 6px; background: #777; }
.hscroll { position: absolute; left: -1px; top: 285px; width: 936px; height: 12px; border-radius: 6px; background: #787878; font-size: 13px; line-height: 1px; padding-left: 110px; color: #222; letter-spacing: 0.2px; }

/* value dialog */
.modal { position: absolute; left: 339px; top: 256px; width: 682px; height: 396px; background: #fff; font-family: Roboto, "Open Sans", sans-serif; font-size: 13px; color: #161616; display: flex; flex-direction: column; }
.modal h3 { margin: 0; height: 44px; padding: 9px 0 0 16px; font-size: 20px; line-height: 24px; font-weight: 300; letter-spacing: 0.22px; color: #000; }
.mtools { height: 48px; display: flex; align-items: center; padding-left: 34px; }
.cnt { width: 411px; color: #525252; letter-spacing: 0.14px; }
.mb { width: 48px; height: 48px; display: flex; align-items: center; justify-content: center; }
.mb svg { width: 16px; height: 16px; stroke-width: 1.1; }
.hot { background: #cbcbcb; }
.dl { margin-left: 1px; }
.cl { margin-left: 4px; }
.thead { width: 626px; height: 104px; margin-left: 16px; background: #e0e0e0; display: flex; padding-left: 17px; gap: 39px; }
.th { width: 265px; padding-top: 18px; }
.th b { display: block; font-weight: 500; line-height: 20px; height: 34px; padding-left: 3px; letter-spacing: 0.05px; }
.filter { height: 40px; background: #fff; border-bottom: 1px solid #6f7f8d; line-height: 37px; padding-left: 16px; letter-spacing: 0.2px; }
.trow { width: 625px; height: 47px; margin-left: 17px; display: flex; color: #0f62fe; border-bottom: 3px solid #f4f4f4; }
.mark { width: 4px; height: 43px; margin-right: 14px; background: #0f62fe; }
.td1 { width: 259px; height: 40px; margin-top: 3px; border: 2px solid #0f62fe; padding: 4px 0 0 8px; line-height: 20px; letter-spacing: 0.2px; }
.td2 { padding: 9px 0 0 55px; line-height: 20px; letter-spacing: 0.06px; }
.trow { background: linear-gradient(#e0e0e0, #e0e0e0) 0 43px / 100% 1px no-repeat; }
.pager { width: 625px; height: 48px; margin-left: 17px; display: flex; align-items: center; color: #525252; }
.pager span { width: 76px; height: 48px; line-height: 50px; padding-left: 17px; border-right: 2px solid #f4f4f4; margin-right: auto; white-space: nowrap; letter-spacing: 0.22px; }
.pg { width: 50px; height: 48px; border-left: 2px solid #f4f4f4; display: flex; align-items: center; justify-content: center; }
.pg.nx { width: 51px; border-right: 2px solid #f4f4f4; }
.pg svg { width: 6px; height: 8px; fill: #d5d5d5; stroke: none; }
.cancel { width: 300px; height: 64px; margin: 39px 0 0 380px; border: 0; background: #0f62fe; color: #fff; font: 14px Roboto, sans-serif; text-align: left; padding: 0 0 2px 16px; }

/* taskbars */
.taskbar { flex: none; height: 40px; display: flex; align-items: center; color: #fff; }
.taskbar svg { stroke: #fff; }
.taskbar .s22, .taskbar .s24, .taskbar .s24w, .taskbar .ball, .taskbar .art { stroke: none; }
.remote { background: #101010; }
.local { background: #1e1e1e; }
.remote .r-win, .local .r-win0 { width: 16px; height: 16px; fill: #fff; stroke: none; }
.r-win { margin-left: 16px; }
.r-search { width: 24px; height: 24px; margin-left: 28px; }
.r-tv { width: 17px; height: 17px; margin-left: 28px; }
.task { width: 160px; height: 40px; display: flex; align-items: center; position: relative; border-bottom: 2px solid #76b9ed; padding-left: 10px; gap: 4px; }
.task svg, .task .ui { margin-top: 2px; }
.edge-task { margin-left: 18px; background: #333; }
.chat-task { margin-left: 1px; background: #9b5119; border-bottom-color: #ff7a0e; padding-left: 12px; gap: 2px; }
.chat-task .ui { letter-spacing: -0.3px; }
.task em { position: absolute; left: 25px; top: 17px; font-size: 11px; line-height: 14px; }
.tray { margin-left: auto; display: flex; align-items: center; }
.caret { width: 13px; height: 8px; }
.spk { width: 18px; height: 16px; }
.remote .spk { margin-left: 9px; }
.lang, .clock, .clock2 { display: flex; flex-direction: column; text-align: center; line-height: 17px; }
.lang { width: 41px; }
.clock { width: 61px; }
.tight { letter-spacing: -0.48px; }
.peek { width: 1px; height: 40px; background: #555; margin-right: 4px; }
.remote .clock { margin-right: 1px; }
.startcell { width: 48px; display: flex; justify-content: center; }
.searchbox { width: 288px; height: 40px; background: #f2f2f2; border: 1px solid #bbb; display: flex; align-items: center; color: #2b2b2b; font-size: 15px; letter-spacing: -0.53px; padding-left: 11px; overflow: hidden; }
.searchbox span { margin-left: 11px; white-space: nowrap; }
.searchbox .sb-ic { width: 17px; height: 17px; stroke: #222; }
.art { width: 77px; height: 35px; margin: 5px 0 0 auto; }
.cell { height: 40px; display: flex; align-items: center; justify-content: center; }
.tv { width: 48px; margin-right: 2px; }
.tvic { width: 17px; height: 17px; }
.c50 { width: 50px; }
.c48 { width: 48px; }
.on { background: linear-gradient(#76b9ed, #76b9ed) center bottom / 40px 2px no-repeat; }
.active { width: 48px; background: #494949; border-bottom: 2px solid #76b9ed; }
.active svg { margin-top: 2px; }
.alert { width: 48px; margin-left: 1px; background: #a65a22; border-bottom: 2px solid #ff7a0e; }
.alert svg { margin-top: 2px; }
.ball { width: 22px; height: 22px; margin-right: 8px; }
.wx { font-size: 14px; letter-spacing: -0.35px; white-space: nowrap; }
.deg { width: 38px; }
.sunny { width: 63px; }
.bat { width: 17px; height: 12px; margin-left: 9px; }
.local .spk { margin-left: 7px; }
.wifi { width: 13px; height: 13px; margin-left: 10px; }
.eng { margin-left: 9px; width: 35px; }
.clock2 { width: 60px; line-height: 18px; }
.tight2 { letter-spacing: -0.4px; }
.note { position: relative; width: 53px; height: 40px; padding: 11px 0 0 17px; }
.note svg { width: 18px; height: 17px; }
.note b { position: absolute; left: 25px; top: 18px; width: 16px; height: 16px; border-radius: 50%; background: #3a3a3a; border: 1px solid #888; font-size: 11px; line-height: 13px; text-align: center; font-weight: 600; }
```
